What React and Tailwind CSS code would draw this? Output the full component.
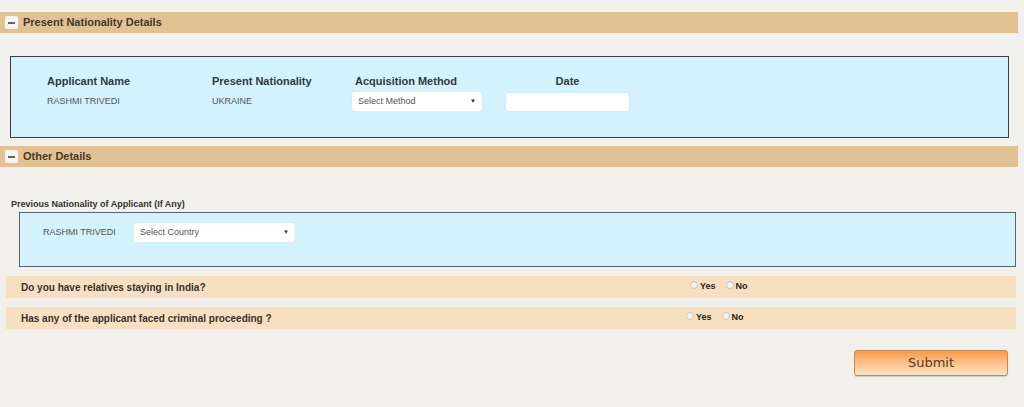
import React from 'react';

const font = { fontFamily: '"Liberation Sans", Arial, sans-serif' };

function SectionHeader({ title }) {
  return (
    <div className="w-[1018px] h-[21px] bg-[#e2c194] flex items-center pl-[5px] gap-[5px]">
      <div className="w-[13px] h-[13px] bg-[#faf6ef] rounded-[2px] flex items-center justify-center">
        <div className="w-[7px] h-[2px] bg-[#6b6258]" />
      </div>
      <span className="text-[11px] font-bold text-[#4a3826]">{title}</span>
    </div>
  );
}

function FakeSelect({ label, width }) {
  return (
    <div
      className={`${width} h-[19px] bg-white rounded-[2px] flex items-center justify-between pl-[6px] pr-[6px] shadow-[0_0_1px_rgba(0,0,0,0.15)]`}
    >
      <span className="text-[9px] text-[#555]">{label}</span>
      <span className="text-[6px] text-[#333]">▼</span>
    </div>
  );
}

function Radio({ label }) {
  return (
    <span className="flex items-center gap-[2px]">
      <span className="w-[8px] h-[8px] rounded-full border border-[#c9c4bc] bg-[#f5f3f0] -mt-[4px]" />
      <span className="text-[9px] font-bold text-[#222]">{label}</span>
    </span>
  );
}

function QuestionRow({ text, radioLeft }) {
  return (
    <div className="ml-[6px] w-[1010px] h-[22px] bg-[#f7dfc0] flex items-center">
      <span className="pl-[15px] w-[684px] text-[10px] font-bold text-[#333]">{text}</span>
      <div className={`flex items-center gap-[10px] ${radioLeft}`}>
        <Radio label="Yes" />
        <Radio label="No" />
      </div>
    </div>
  );
}

export default function App() {
  return (
    <div style={font} className="w-[1024px] h-[407px] bg-[#f2f0ec] pt-[12px] overflow-hidden">
      <SectionHeader title="Present Nationality Details" />

      <div className="mt-[23px] ml-[10px] w-[999px] h-[82px] border border-[#3b4046] bg-[#d3f2fb] pt-[17px] pl-[36px]">
        <div className="flex text-[11px] font-bold text-[#2e3a40] h-[14px] items-center">
          <span className="w-[165px]">Applicant Name</span>
          <span className="w-[143px]">Present Nationality</span>
          <span className="w-[151px]">Acquisition Method</span>
          <span className="w-[123px] text-center">Date</span>
        </div>
        <div className="flex items-center mt-[4px] h-[19px]">
          <span className="w-[165px] text-[9px] text-[#555]">RASHMI TRIVEDI</span>
          <span className="w-[140px] text-[9px] text-[#555]">UKRAINE</span>
          <div className="w-[154px]">
            <FakeSelect label="Select Method" width="w-[130px]" />
          </div>
          <div className="w-[123px] h-[18px] bg-white rounded-[2px] shadow-[0_0_1px_rgba(0,0,0,0.2)]" />
        </div>
      </div>

      <div className="mt-[8px]">
        <SectionHeader title="Other Details" />
      </div>

      <div className="mt-[31px] pl-[11px] text-[9px] font-bold text-[#333] h-[12px] leading-[12px]">
        Previous Nationality of Applicant (If Any)
      </div>

      <div className="mt-[2px] ml-[19px] w-[997px] h-[55px] border border-[#5c6368] bg-[#d3f2fb] pt-[10px] pl-[23px] flex items-start">
        <div className="flex items-center h-[19px]">
          <span className="w-[91px] text-[9px] text-[#555]">RASHMI TRIVEDI</span>
          <FakeSelect label="Select Country" width="w-[161px]" />
        </div>
      </div>

      <div className="mt-[9px]">
        <QuestionRow text="Do you have relatives staying in India?" radioLeft="" />
      </div>
      <div className="mt-[9px]">
        <QuestionRow text="Has any of the applicant faced criminal proceeding ?" radioLeft="-ml-[4px]" />
      </div>

      <div className="flex justify-end pr-[16px] mt-[21px]">
        <button
          className="w-[154px] h-[26px] rounded-[3px] border border-[#c08a55] bg-gradient-to-b from-[#f89b45] to-[#fde3c6] text-[13px] text-[#5a3a1e] shadow-[0_1px_1px_rgba(0,0,0,0.15)]"
          style={{ fontFamily: '"DejaVu Sans", Verdana, sans-serif' }}
        >
          Submit
        </button>
      </div>
    </div>
  );
}
